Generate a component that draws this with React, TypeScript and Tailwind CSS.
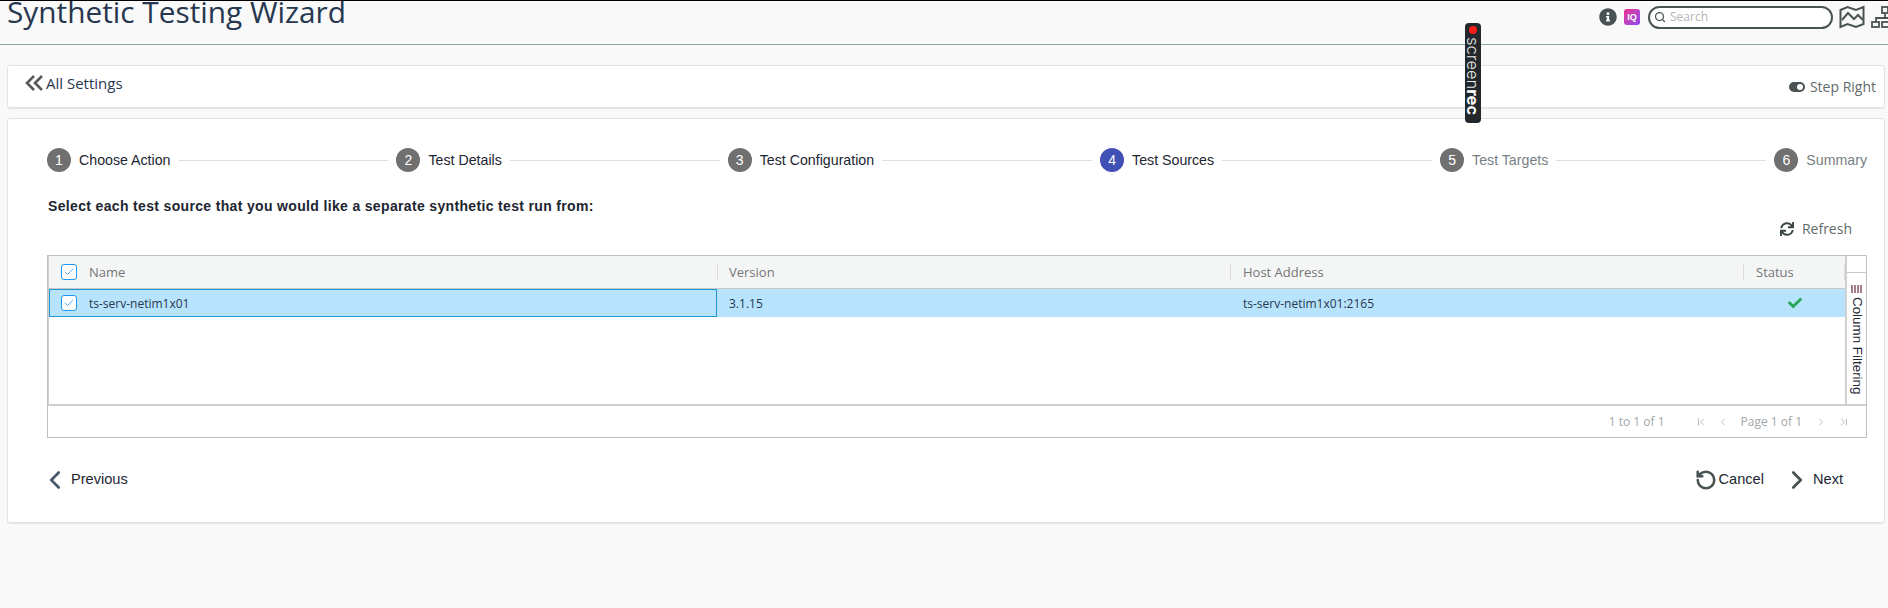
import { Check, ChevronFirst, ChevronLast, ChevronLeft, ChevronRight, RotateCcw, Search } from "lucide-react"
import { FaCheck, FaInfoCircle, FaSync } from "react-icons/fa"

const steps = [
    { n: 1, label: "Choose Action", tone: "done" },
    { n: 2, label: "Test Details", tone: "done" },
    { n: 3, label: "Test Configuration", tone: "done" },
    { n: 4, label: "Test Sources", tone: "active" },
    { n: 5, label: "Test Targets", tone: "todo" },
    { n: 6, label: "Summary", tone: "todo" },
]

function Tick() {
    return (
        <span className="flex h-4 w-4 items-center justify-center rounded-[3px] border border-[#2196f3] bg-white">
            <Check className="h-3 w-3 text-[#2196f3]" strokeWidth={1.5} />
        </span>
    )
}

export default function App() {
    return (
        <div className="relative h-[608px] overflow-hidden border-t border-black bg-[#f9f9f9] font-['Liberation_Sans',sans-serif]">
            {/* cabecera */}
            <div className="flex h-[44px] items-start justify-between overflow-hidden border-b border-[#8fa5a5] pl-[7px]">
                <h1 className="-mt-[8px] font-['Open_Sans',sans-serif] text-[29.8px] leading-[38px] text-[#26374f]">
                    Synthetic Testing Wizard
                </h1>
                <div className="-mr-[3px] mt-[4px] flex items-center">
                    <FaInfoCircle className="h-[18px] w-[18px] text-[#4a5353]" />
                    <span className="ml-[7px] flex h-4 w-4 items-center justify-center rounded-[3px] bg-gradient-to-br from-[#f0218f] to-[#8a3ff0] text-[9px] font-bold leading-none text-white">
                        IQ
                    </span>
                    <div className="ml-[8px] flex h-[23px] w-[185px] items-center rounded-full border-2 border-[#4a5353] bg-white pl-[4px]">
                        <Search className="h-[12px] w-[12px] text-[#4a5353]" strokeWidth={2.5} />
                        <span className="ml-[4px] font-['Open_Sans',sans-serif] text-[12px] text-[#b5b5b5]">Search</span>
                    </div>
                    <svg className="ml-[6px] h-[24px] w-[26px] text-[#4a5353]" viewBox="0 0 26 24" fill="none" stroke="currentColor" strokeWidth="2">
                        <path d="M1.5 5 L8.5 2 L17 5 L24.5 2 V19 L17 22 L8.5 19 L1.5 22 Z" />
                        <path d="M3 15 L9 8 L15 14 L19 10 L24 15" />
                    </svg>
                    <svg className="ml-[6px] h-[22px] w-[20px] text-[#4a5353]" viewBox="0 0 20 22" fill="none" stroke="currentColor" strokeWidth="1.8">
                        <rect x="11" y="1" width="6" height="6" />
                        <path d="M14 7 V12 M5 16 V12 H20" />
                        <rect x="1" y="16" width="7" height="5" />
                        <rect x="11" y="16" width="7" height="5" />
                    </svg>
                </div>
            </div>

            <div className="pl-[7px] pr-[3px] pt-[20px]">
                {/* barra de navegación */}
                <div className="flex h-[43px] justify-between rounded-[3px] border border-[#e2e2e2] bg-white shadow-[0_1px_1px_rgba(0,0,0,0.08)]">
                    <div className="flex items-start pl-[17px] pt-[5px]">
                        <svg className="mt-[4px] h-[16px] w-[18px] text-[#595959]" viewBox="0 0 18 16" fill="none" stroke="currentColor" strokeWidth="2.6">
                            <path d="M9 1 L2 8 L9 15 M17 1 L10 8 L17 15" />
                        </svg>
                        <span className="ml-[3px] font-['Open_Sans',sans-serif] text-[15px] leading-[24px] text-[#26374f]">All Settings</span>
                    </div>
                    <div className="flex items-center gap-[5px] pr-[8px]">
                        <span className="flex h-[10px] w-4 items-center justify-end rounded-full bg-[#4a5353] pr-[2px]">
                            <span className="h-[6px] w-[6px] rounded-full bg-white" />
                        </span>
                        <span className="font-['Open_Sans',sans-serif] text-[14px] text-[#5f6b6b]">Step Right</span>
                    </div>
                </div>

                {/* tarjeta del asistente */}
                <div className="mt-[10px] h-[405px] rounded-[3px] border border-[#e2e2e2] bg-white pl-[39px] pr-[17px] pt-[29px] shadow-[0_1px_1px_rgba(0,0,0,0.08)]">
                    <div className="flex items-center">
                        {steps.map((s, i) => (
                            <div key={s.n} className={i < steps.length - 1 ? "flex flex-auto items-center" : "flex items-center"}>
                                <span className={`flex h-6 w-6 items-center justify-center rounded-full text-[14px] text-white ${s.tone === "active" ? "bg-[#3f51b5]" : "bg-[#707070]"}`}>
                                    {s.n}
                                </span>
                                <span className={`ml-2 whitespace-nowrap pt-px text-[14.2px] ${s.tone === "todo" ? "text-[#777f85]" : "text-[#1c2530]"}`}>
                                    {s.label}
                                </span>
                                {i < steps.length - 1 && <span className="mx-2 h-px flex-1 bg-[#dedede]" />}
                            </div>
                        ))}
                    </div>

                    <p className="ml-px mt-[25px] text-[14px] font-bold leading-[18px] tracking-[0.34px] text-[#1c2530]">
                        Select each test source that you would like a separate synthetic test run from:
                    </p>

                    <div className="mt-[2px] flex items-center justify-end gap-[8px] pr-[15px] font-['Open_Sans',sans-serif] text-[14px] leading-[24px] text-[#5f6b6b]">
                        <FaSync className="h-[14px] w-[14px] text-[#3c4545]" />
                        Refresh
                    </div>

                    {/* tabla */}
                    <div className="mt-[14px] border border-[#c0c0c0] font-['Open_Sans',sans-serif] text-[12px]">
                        <div className="flex h-[150px] border-b-2 border-[#d0d0d0]">
                            <div className="flex-1 border-l border-[#d0d0d0]">
                                <div className="grid h-[33px] grid-cols-[668px_513px_513px_1fr] items-center border-b border-[#c8c8c8] bg-[#f4f6f6] text-[13px] font-medium text-[#757575]">
                                    <div className="flex items-center pl-[12px]">
                                        <Tick />
                                        <span className="ml-[12px] pt-[2px]">Name</span>
                                    </div>
                                    <span className="flex h-4 items-center border-l border-[#dcdcdc] pl-[11px] pt-[2px]">Version</span>
                                    <span className="flex h-4 items-center border-l border-[#dcdcdc] pl-[12px] pt-[2px]">Host Address</span>
                                    <span className="flex h-4 items-center border-x border-[#dcdcdc] pl-[12px] pt-[2px]">Status</span>
                                </div>
                                <div className="grid h-[28px] grid-cols-[668px_513px_513px_1fr] items-center bg-[#b7e3fd] text-[#26374f]">
                                    <div className="flex h-full items-center border border-[#2196d3] pl-[11px]">
                                        <Tick />
                                        <span className="ml-[12px] pt-[2px]">ts-serv-netim1x01</span>
                                    </div>
                                    <span className="pl-[12px] pt-[2px]">3.1.15</span>
                                    <span className="pl-[13px] pt-[2px]">ts-serv-netim1x01:2165</span>
                                    <span className="flex justify-center pl-[2px]">
                                        <FaCheck className="h-[14px] w-[14px] text-[#27a559]" />
                                    </span>
                                </div>
                            </div>
                            <div className="w-[21px] border-l-2 border-[#d0d0d0]">
                                <div className="h-[17px] border-b border-[#c8c8c8]" />
                                <div className="flex flex-col items-center pt-[12px]">
                                    <svg className="h-[8px] w-[11px] text-[#6a2a3a]" viewBox="0 0 11 8" stroke="currentColor" strokeWidth="1.2">
                                        <path d="M1 0 V8 M4 0 V8 M7 0 V8 M10 0 V8" />
                                    </svg>
                                    <span className="mt-[4px] whitespace-nowrap font-['Liberation_Sans',sans-serif] text-[13.4px] leading-[16px] text-[#1c2530] [writing-mode:vertical-rl]">Column Filtering</span>
                                </div>
                            </div>
                        </div>
                        <div className="flex h-[31px] items-center justify-end pr-[16px] pt-px text-[#a2a7aa]">
                            <span>1 to 1 of 1</span>
                            <ChevronFirst className="ml-[30px] h-3 w-3" strokeWidth={1.5} />
                            <ChevronLeft className="ml-[10px] h-3 w-3" strokeWidth={1.5} />
                            <span className="ml-[12px]">Page 1 of 1</span>
                            <ChevronRight className="ml-[13px] h-3 w-3" strokeWidth={1.5} />
                            <ChevronLast className="ml-[11px] h-3 w-3" strokeWidth={1.5} />
                        </div>
                    </div>

                    {/* acciones */}
                    <div className="mt-[27px] flex items-center justify-between text-[14.6px] text-[#1c2530]">
                        <div className="flex items-center">
                            <ChevronLeft className="-ml-[7px] h-[30px] w-[30px] text-[#4a5a68]" strokeWidth={2.2} />
                            <span className="ml-[1px]">Previous</span>
                        </div>
                        <div className="flex items-center pr-[24px]">
                            <RotateCcw className="h-[22px] w-[22px] text-[#4a5353]" strokeWidth={2.8} />
                            <span className="ml-[2px]">Cancel</span>
                            <ChevronRight className="ml-[18px] h-[30px] w-[30px] text-[#4a5353]" strokeWidth={2.2} />
                            <span className="ml-[1px]">Next</span>
                        </div>
                    </div>
                </div>
            </div>

            {/* widget de grabación */}
            <div className="absolute left-[1465px] top-[22px] flex h-[100px] w-4 flex-col items-center rounded-[4px] bg-[#23282d] pt-[3px]">
                <span className="h-[8px] w-[8px] shrink-0 rounded-full bg-[#ff1a1a]" />
                <span className="mt-[3px] whitespace-nowrap font-['Inter',sans-serif] text-[16.5px] font-light leading-[16px] text-[#e8e8e8] [writing-mode:vertical-rl]">
                    screen<b className="font-bold text-white">rec</b>
                </span>
            </div>
        </div>
    )
}
